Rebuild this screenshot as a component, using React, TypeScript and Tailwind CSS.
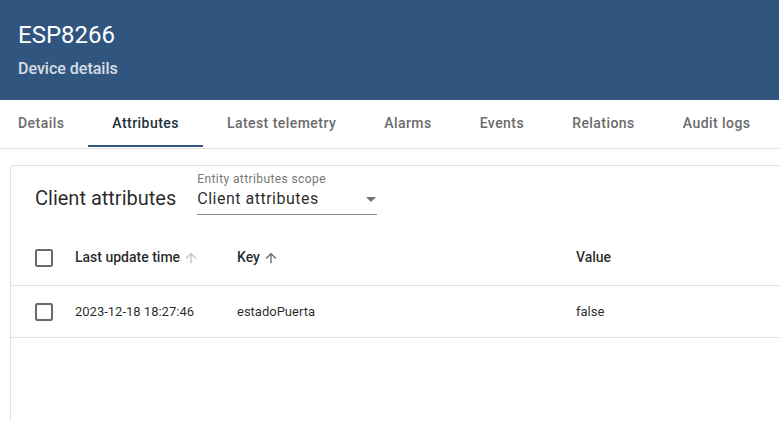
import React from "react";

const tabs = ["Details", "Attributes", "Latest telemetry", "Alarms", "Events", "Relations", "Audit logs"];

function Checkbox() {
  return <div className="w-[18px] h-[18px] border-2 border-[#6b6b6b] rounded-[2px]" />;
}

function Arrow({ color }: { color: string }) {
  return (
    <svg width="16" height="16" viewBox="0 0 24 24" className="ml-[3px]">
      <path d="M4 12l1.41 1.41L11 7.83V20h2V7.83l5.58 5.59L20 12l-8-8-8 8z" fill={color} />
    </svg>
  );
}

export default function App() {
  return (
    <div className="w-[779px] h-[421px] overflow-hidden bg-white" style={{ fontFamily: "Roboto, 'Liberation Sans', sans-serif" }}>
      <div className="h-[100px] bg-[#305680] pl-[18px] pt-[20px]">
        <div className="text-[24px] leading-[30px] text-white">ESP8266</div>
        <div className="text-[16px] leading-[20px] mt-[9px] text-white/80 font-medium">Device details</div>
      </div>
      <div className="flex h-[49px] border-b border-[#e0e0e0]">
        {tabs.map((t, i) => (
          <div
            key={t}
            className={`relative flex items-center pb-[2px] text-[14px] tracking-[0.45px] font-medium ${i === 0 ? "pl-[18px] pr-[24px]" : "px-[24px]"} ${i === 1 ? "text-[#1f2f40]" : "text-[#6b6b6b]"}`}
          >
            {t}
            {i === 1 && <div className="absolute left-0 right-0 bottom-[1px] h-[2px] bg-[#305680]" />}
          </div>
        ))}
      </div>
      <div className="ml-[10px] mt-[16px] border-l border-t border-[#e0e0e0] rounded-tl-[4px] h-[300px]">
        <div className="flex items-end pl-[24px] h-[49px]">
          <div className="text-[20px] text-black/85 leading-[24px] mb-[5px]">Client attributes</div>
          <div className="ml-[21px] w-[180px] border-b border-[#8a8a8a] pb-[4px]">
            <div className="text-[12px] tracking-[0.4px] text-[#777] leading-[14px] -mt-[2px] mb-[2px]">Entity attributes scope</div>
            <div className="flex items-center justify-between">
              <span className="text-[16px] tracking-[0.5px] text-black/85 leading-[22px]">Client attributes</span>
              <svg width="10" height="5" viewBox="0 0 10 5" className="mr-[1px]">
                <path d="M0 0l5 5 5-5z" fill="#757575" />
              </svg>
            </div>
          </div>
        </div>
        <div className="flex items-center h-[56px] mt-[15px] border-b border-[#e0e0e0] text-[14px] font-medium text-black/85">
          <div className="pl-[24px] w-[64px]"><Checkbox /></div>
          <div className="w-[162px] flex items-center">Last update time<Arrow color="#c4c4c4" /></div>
          <div className="w-[339px] flex items-center">Key<Arrow color="#6b6b6b" /></div>
          <div>Value</div>
        </div>
        <div className="flex items-center h-[52px] border-b border-[#e0e0e0] text-[13px] text-black/85">
          <div className="pl-[24px] w-[64px]"><Checkbox /></div>
          <div className="w-[162px]">2023-12-18 18:27:46</div>
          <div className="w-[339px]">estadoPuerta</div>
          <div>false</div>
        </div>
      </div>
    </div>
  );
}
